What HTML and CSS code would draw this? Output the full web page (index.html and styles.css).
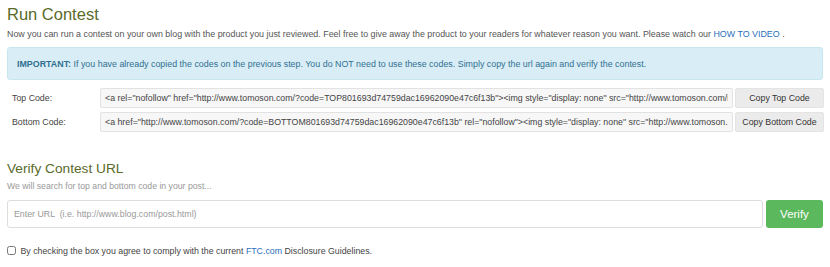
FILE: index.html
```html
<!DOCTYPE html>
<html lang="en">
<head>
    <meta charset="UTF-8">
    <title>Run Contest</title>
    <link rel="stylesheet" href="styles.css">
</head>
<body>

<div class="contest">
    <h2>Run Contest</h2>
    <p class="intro">Now you can run a contest on your own blog with the product you just reviewed. Feel free to give away the product to your readers for whatever reason you want. Please watch our <a href="#">HOW TO VIDEO</a> .</p>

    <div class="alert">
        <strong>IMPORTANT:</strong> If you have already copied the codes on the previous step. You do NOT need to use these codes. Simply copy the url again and verify the contest.
    </div>

    <div class="codes">
        <div class="code-row">
            <label for="topCode">Top Code:</label>
            <input type="text" id="topCode" readonly value='<a rel="nofollow" href="http://www.tomoson.com/?code=TOP801693d74759dac16962090e47c6f13b"><img style="display: none" src="http://www.tomoson.com/img/t.gif"></a>'>
            <button type="button" class="copy">Copy Top Code</button>
        </div>
        <div class="code-row">
            <label for="bottomCode">Bottom Code:</label>
            <input type="text" id="bottomCode" readonly value='<a href="http://www.tomoson.com/?code=BOTTOM801693d74759dac16962090e47c6f13b" rel="nofollow"><img style="display: none" src="http://www.tomoson.com/img/b.gif"></a>'>
            <button type="button" class="copy">Copy Bottom Code</button>
        </div>
    </div>

    <h3>Verify Contest URL</h3>
    <p class="hint">We will search for top and bottom code in your post...</p>

    <form class="verify">
        <input type="text" placeholder="Enter URL  (i.e. http://www.blog.com/post.html)">
        <button type="button">Verify</button>
    </form>

    <label class="agree"><input type="checkbox"> By checking the box you agree to comply with the current <a href="#">FTC.com</a> Disclosure Guidelines.</label>
</div>

</body>
</html>
```

FILE: styles.css
```css
body {
    margin: 0;
    font-family: 'Liberation Sans', Arial, sans-serif;
    color: #333;
    background: #fff;
}
.contest {
    padding: 4px 7px 0 7px;
}
.contest h2 {
    margin: 0;
    font-size: 16.5px;
    font-weight: normal;
    color: #5a6b2b;
    line-height: 20px;
}
.intro {
    margin: 3px 0 6px;
    font-size: 8.9px;
    line-height: 14px;
    color: #555;
}
.contest a {
    color: #2a6ebb;
    text-decoration: none;
}
.alert {
    background: #d9edf7;
    border: 1px solid #c6e6f0;
    border-radius: 3px;
    padding: 10px 9px 9px;
    font-size: 8.9px;
    line-height: 12px;
    color: #31708f;
}
.codes {
    display: flex;
    flex-direction: column;
    gap: 4px;
    margin: 8px -1px 0 5px;
}
.code-row {
    display: flex;
    align-items: center;
}
.code-row label {
    width: 88px;
    flex-shrink: 0;
    font-size: 8.8px;
    color: #444;
}
.code-row input {
    flex: 1;
    min-width: 0;
    height: 20px;
    box-sizing: border-box;
    padding: 0 4px;
    border: 1px solid #e2e2e2;
    border-radius: 2px;
    background: #f7f7f7;
    font-family: 'Liberation Sans', Arial, sans-serif;
    font-size: 8.8px;
    color: #444;
}
.copy {
    width: 89px;
    height: 20px;
    margin-left: 2px;
    box-sizing: border-box;
    padding: 0;
    border: 1px solid #e4e4e4;
    border-radius: 2px;
    background: #ebebeb;
    font-family: 'Liberation Sans', Arial, sans-serif;
    font-size: 8.8px;
    color: #333;
}
.contest h3 {
    margin: 28px 0 0;
    font-size: 13.7px;
    font-weight: normal;
    color: #5a6b2b;
    line-height: 18px;
}
.hint {
    margin: 2px 0 8px;
    font-size: 8.7px;
    color: #999;
    line-height: 12px;
}
.verify {
    display: flex;
    gap: 3px;
    margin: 0;
}
.verify input {
    flex: 1;
    height: 28px;
    box-sizing: border-box;
    padding: 0 6px;
    border: 1px solid #ddd;
    border-radius: 3px;
    font-family: 'Liberation Sans', Arial, sans-serif;
    font-size: 8.8px;
}
.verify input::placeholder {
    color: #999;
}
.verify button {
    width: 57px;
    height: 28px;
    border: none;
    border-radius: 3px;
    background: #5cb85c;
    color: #fff;
    font-family: 'Liberation Sans', Arial, sans-serif;
    font-size: 11.5px;
}
.agree {
    display: block;
    margin-top: 17px;
    font-size: 8.8px;
    line-height: 12px;
    color: #444;
}
.agree input {
    margin: 0 2px 0 0;
    width: 9px;
    height: 9px;
    vertical-align: -1px;
}
```
